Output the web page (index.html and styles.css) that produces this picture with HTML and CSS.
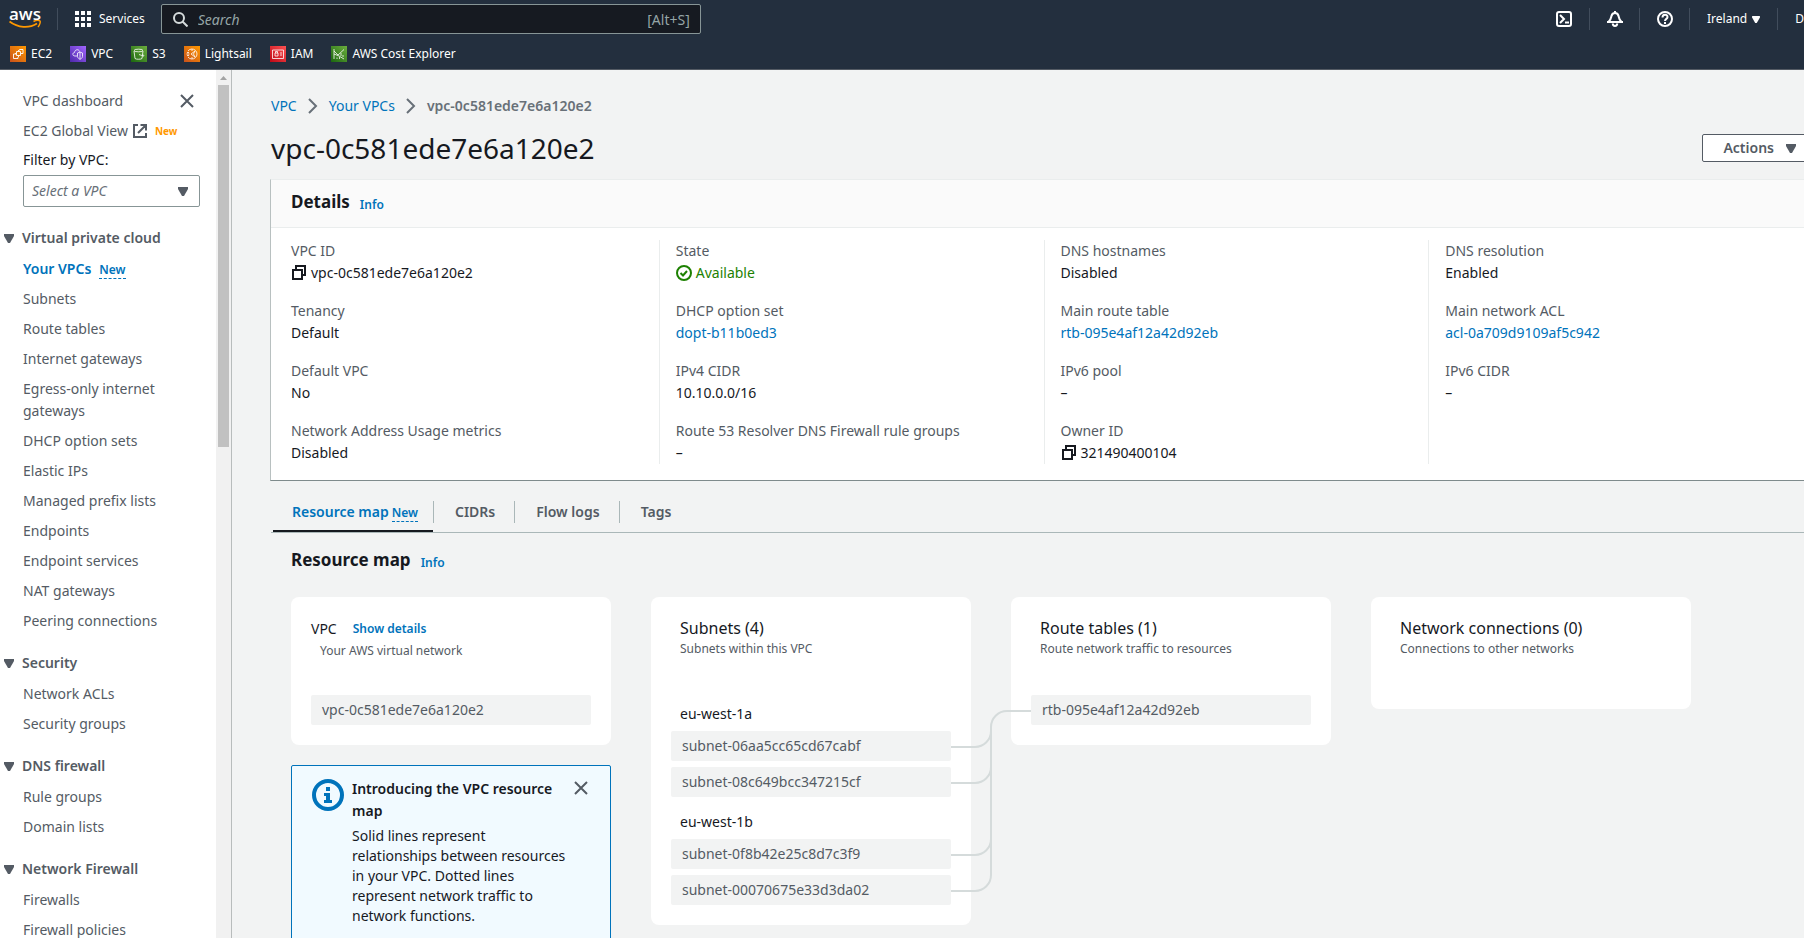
FILE: index.html
```html
<!DOCTYPE html>
<html lang="en">
<head>
<meta charset="utf-8">
<title>vpc-0c581ede7e6a120e2 | VPC Console</title>
<link rel="stylesheet" href="styles.css">
</head>
<body>
<svg class="defs" aria-hidden="true">
  <defs>
    <linearGradient id="orange" x1="0" y1="1" x2="1" y2="0"><stop offset="0" stop-color="#c8511b"/><stop offset="1" stop-color="#ff9900"/></linearGradient>
    <linearGradient id="purple" x1="0" y1="1" x2="1" y2="0"><stop offset="0" stop-color="#4d27aa"/><stop offset="1" stop-color="#a166ff"/></linearGradient>
    <linearGradient id="green" x1="0" y1="1" x2="1" y2="0"><stop offset="0" stop-color="#1b660f"/><stop offset="1" stop-color="#6cae3e"/></linearGradient>
    <linearGradient id="red" x1="0" y1="1" x2="1" y2="0"><stop offset="0" stop-color="#bd0816"/><stop offset="1" stop-color="#ff5252"/></linearGradient>
    <symbol id="caret" viewBox="0 0 10 9"><path d="M0 0h10v2L6 9H4L0 2z"/></symbol>
    <symbol id="close" viewBox="0 0 14 14"><path d="M1 1l12 12M13 1L1 13" fill="none" stroke="currentColor" stroke-width="2"/></symbol>
    <symbol id="copy" viewBox="0 0 16 16"><path d="M2 5h9v9H2zM5 4.500V1h9v9h-2.500" fill="none" stroke="currentColor" stroke-width="2"/></symbol>
    <symbol id="chevron" viewBox="0 0 10 16"><path d="M1 1l7 7-7 7" fill="none" stroke="currentColor" stroke-width="2"/></symbol>
  </defs>
</svg>

<header class="topbar">
  <div class="topbar-main">
    <a class="logo" href="#" aria-label="AWS home">
      <span class="logo-word">aws</span>
      <svg class="logo-smile" viewBox="0 0 32 9" aria-hidden="true"><path d="M.5 1.500C9 8 20 8.500 28 3.500" fill="none" stroke="#ff9900" stroke-width="1.800"/><path d="M24.500 1.500C27 .3 30 .3 31 1c.6 1-.3 4-2 6" fill="none" stroke="#ff9900" stroke-width="1.500"/></svg>
    </a>
    <button class="services" type="button">
      <svg width="16" height="16" viewBox="0 0 16 16" fill="currentColor" aria-hidden="true"><path d="M0 0h4v4H0zM6 0h4v4H6zM12 0h4v4h-4zM0 6h4v4H0zM6 6h4v4H6zM12 6h4v4h-4zM0 12h4v4H0zM6 12h4v4H6zM12 12h4v4h-4z"/></svg>
      Services
    </button>
    <div class="search">
      <svg width="15" height="15" viewBox="0 0 15 15" fill="none" stroke="currentColor" stroke-width="2" aria-hidden="true"><circle cx="6" cy="6" r="5"/><path d="M9.500 9.500l5 5"/></svg>
      <input type="text" placeholder="Search" aria-label="Search">
      <span>[Alt+S]</span>
    </div>
    <div class="tools">
      <button type="button" class="tool" aria-label="CloudShell"><svg width="16" height="16" viewBox="0 0 16 16" fill="none" stroke="currentColor" stroke-width="2" aria-hidden="true"><rect x="1" y="1" width="14" height="14" rx="2"/><path d="M4 4l4 4-4 4M9 11.500h4"/></svg></button>
      <button type="button" class="tool" aria-label="Notifications"><svg width="16" height="16" viewBox="0 0 16 16" fill="none" stroke="currentColor" stroke-width="2" aria-hidden="true"><path d="M8 0v2M1.500 11C4 8.500 4 7 4.300 5.500 4.700 3.300 6 2 8 2s3.300 1.300 3.700 3.500C12 7 12 8.500 14.500 11M0 11h16M5.800 12.500c0 3.200 4.400 3.200 4.400 0"/></svg></button>
      <button type="button" class="tool" aria-label="Help"><svg width="16" height="16" viewBox="0 0 16 16" fill="none" stroke="currentColor" stroke-width="2" aria-hidden="true"><circle cx="8" cy="8" r="7"/><path d="M5.500 6.500C5.500 3 10.500 3 10.500 6c0 2-2.500 1.700-2.500 4M8 11v2"/></svg></button>
      <button type="button" class="region">Ireland <svg width="8" height="7" fill="currentColor" aria-hidden="true"><use href="#caret"/></svg></button>
      <button type="button" class="account">D</button>
    </div>
  </div>
  <nav class="favorites" aria-label="Favorites">
    <a href="#"><svg viewBox="0 0 16 16" aria-hidden="true"><path fill="url(#orange)" d="M0 0h16v16H0z"/><path d="M6.500 5.500h4v4h-4zM6 8H3.500v4.500H8V11M9.500 4.500v-1h3.500v4h-1.500M8.500 4v1M5 7.500h1M11 7.500h1M8.500 10v1" fill="none" stroke="#fff" stroke-width=".9"/></svg>EC2</a>
    <a href="#"><svg viewBox="0 0 16 16" aria-hidden="true"><path fill="url(#purple)" d="M0 0h16v16H0z"/><path d="M7 10H5c-3 0-2.500-3.500-.5-3.500C5 3 9 3 9.500 5.500M10 6l2.500 1v3.500c0 1.500-2.500 3-2.500 3s-2.500-1.500-2.500-3V7zM10 6v7" fill="none" stroke="#fff" stroke-width=".8"/></svg>VPC</a>
    <a href="#"><svg viewBox="0 0 16 16" aria-hidden="true"><path fill="url(#green)" d="M0 0h16v16H0z"/><path d="M3 5l1 7.500c1 1 6 1 7 0L12 5M8 8.500l4.500 1.500c1 0 .5-.8-.8-1.300" fill="none" stroke="#fff" stroke-width=".8"/><ellipse cx="7.500" cy="4.500" rx="4.500" ry="1.300" fill="none" stroke="#fff" stroke-width=".8"/></svg>S3</a>
    <a href="#"><svg viewBox="0 0 16 16" aria-hidden="true"><path fill="url(#orange)" d="M0 0h16v16H0z"/><path d="M4 5a5 5 0 1 1 0 6M2.500 8h3M3 6.500h2M3 9.500h2M7 8l4-3-1.500 3L11 11zM8 3v2M8 11v2" fill="none" stroke="#fff" stroke-width=".8"/></svg>Lightsail</a>
    <a href="#"><svg viewBox="0 0 16 16" aria-hidden="true"><path fill="url(#red)" d="M0 0h16v16H0z"/><path d="M2.500 4h11v8.500h-11zM5 7h3v3H5zM5.500 7V5.500h2V7M10 7h2M10 9h2" fill="none" stroke="#fff" stroke-width=".8"/></svg>IAM</a>
    <a href="#"><svg viewBox="0 0 16 16" aria-hidden="true"><path fill="url(#green)" d="M0 0h16v16H0z"/><path d="M3 3v10M3 5l4 4 6-5.500M3 8l5 2 5 3M6 11.500V13M8.500 11v2M10 7v3M12 9v2" fill="none" stroke="#fff" stroke-width=".8"/></svg>AWS Cost Explorer</a>
  </nav>
</header>

<div class="shell">
  <aside class="sidebar">
    <nav class="side-nav" aria-label="VPC">
      <div class="side-top">
        <a href="#">VPC dashboard</a>
        <button type="button" class="icon-button" aria-label="Close navigation"><svg width="14" height="14" aria-hidden="true"><use href="#close"/></svg></button>
      </div>
      <div class="side-global">
        <a href="#">EC2 Global View</a>
        <svg width="14" height="14" viewBox="0 0 14 14" fill="none" stroke="currentColor" stroke-width="2" aria-hidden="true"><path d="M5 1H1v12h12V9M7.500 1H13v5.500M13 1L5 9"/></svg>
        <span class="badge-new">New</span>
      </div>
      <label class="filter-label" for="vpc-filter">Filter by VPC:</label>
      <div class="select">
        <select id="vpc-filter"><option>Select a VPC</option></select>
        <svg width="10" height="9" aria-hidden="true"><use href="#caret"/></svg>
      </div>
      <section class="group">
        <button type="button" class="group-title"><svg width="10" height="9" aria-hidden="true"><use href="#caret"/></svg>Virtual private cloud</button>
        <ul>
          <li><a class="current" href="#">Your VPCs</a><span class="new">New</span></li>
          <li><a href="#">Subnets</a></li>
          <li><a href="#">Route tables</a></li>
          <li><a href="#">Internet gateways</a></li>
          <li><a href="#">Egress-only internet gateways</a></li>
          <li><a href="#">DHCP option sets</a></li>
          <li><a href="#">Elastic IPs</a></li>
          <li><a href="#">Managed prefix lists</a></li>
          <li><a href="#">Endpoints</a></li>
          <li><a href="#">Endpoint services</a></li>
          <li><a href="#">NAT gateways</a></li>
          <li><a href="#">Peering connections</a></li>
        </ul>
      </section>
      <section class="group">
        <button type="button" class="group-title"><svg width="10" height="9" aria-hidden="true"><use href="#caret"/></svg>Security</button>
        <ul>
          <li><a href="#">Network ACLs</a></li>
          <li><a href="#">Security groups</a></li>
        </ul>
      </section>
      <section class="group">
        <button type="button" class="group-title"><svg width="10" height="9" aria-hidden="true"><use href="#caret"/></svg>DNS firewall</button>
        <ul>
          <li><a href="#">Rule groups</a></li>
          <li><a href="#">Domain lists</a></li>
        </ul>
      </section>
      <section class="group">
        <button type="button" class="group-title"><svg width="10" height="9" aria-hidden="true"><use href="#caret"/></svg>Network Firewall</button>
        <ul>
          <li><a href="#">Firewalls</a></li>
          <li><a href="#">Firewall policies</a></li>
        </ul>
      </section>
    </nav>
    <div class="scrollbar" aria-hidden="true">
      <svg width="7" height="4" viewBox="0 0 7 4"><path d="M3.500 0L7 4H0z" fill="#a3a3a3"/></svg>
      <div class="thumb"></div>
    </div>
  </aside>

  <main class="content">
    <div class="page">
      <nav class="breadcrumb" aria-label="Breadcrumb">
        <a href="#">VPC</a>
        <svg width="10" height="16" aria-hidden="true"><use href="#chevron"/></svg>
        <a href="#">Your VPCs</a>
        <svg width="10" height="16" aria-hidden="true"><use href="#chevron"/></svg>
        <span>vpc-0c581ede7e6a120e2</span>
      </nav>
      <div class="page-head">
        <h1>vpc-0c581ede7e6a120e2</h1>
        <button type="button" class="actions">Actions <svg width="10" height="9" fill="currentColor" aria-hidden="true"><use href="#caret"/></svg></button>
      </div>

      <section class="card">
        <div class="card-head"><h2>Details</h2><a class="info" href="#">Info</a></div>
        <div class="columns">
          <dl>
            <div><dt>VPC ID</dt><dd><svg width="16" height="16" aria-hidden="true"><use href="#copy"/></svg>vpc-0c581ede7e6a120e2</dd></div>
            <div><dt>Tenancy</dt><dd>Default</dd></div>
            <div><dt>Default VPC</dt><dd>No</dd></div>
            <div><dt>Network Address Usage metrics</dt><dd>Disabled</dd></div>
          </dl>
          <dl>
            <div><dt>State</dt><dd class="ok"><svg width="16" height="16" viewBox="0 0 16 16" fill="none" stroke="currentColor" stroke-width="2" aria-hidden="true"><circle cx="8" cy="8" r="7"/><path d="M4.500 8l2.500 2.500 4-4.500"/></svg>Available</dd></div>
            <div><dt>DHCP option set</dt><dd><a href="#">dopt-b11b0ed3</a></dd></div>
            <div><dt>IPv4 CIDR</dt><dd>10.10.0.0/16</dd></div>
            <div><dt>Route 53 Resolver DNS Firewall rule groups</dt><dd>–</dd></div>
          </dl>
          <dl>
            <div><dt>DNS hostnames</dt><dd>Disabled</dd></div>
            <div><dt>Main route table</dt><dd><a href="#">rtb-095e4af12a42d92eb</a></dd></div>
            <div><dt>IPv6 pool</dt><dd>–</dd></div>
            <div><dt>Owner ID</dt><dd><svg width="16" height="16" aria-hidden="true"><use href="#copy"/></svg>321490400104</dd></div>
          </dl>
          <dl>
            <div><dt>DNS resolution</dt><dd>Enabled</dd></div>
            <div><dt>Main network ACL</dt><dd><a href="#">acl-0a709d9109af5c942</a></dd></div>
            <div><dt>IPv6 CIDR</dt><dd>–</dd></div>
          </dl>
        </div>
      </section>

      <div class="tabs" role="tablist">
        <button type="button" role="tab" aria-selected="true" class="tab active">Resource map <span class="new">New</span></button>
        <button type="button" role="tab" class="tab">CIDRs</button>
        <button type="button" role="tab" class="tab">Flow logs</button>
        <button type="button" role="tab" class="tab">Tags</button>
      </div>

      <section class="map">
        <div class="map-head"><h2>Resource map</h2><a class="info" href="#">Info</a></div>
        <div class="map-columns">
          <div class="map-column">
            <article class="tile vpc-tile">
              <header><h3>VPC</h3><a class="info" href="#">Show details</a></header>
              <p>Your AWS virtual network</p>
              <button type="button" class="node">vpc-0c581ede7e6a120e2</button>
            </article>
            <section class="notice">
              <svg width="32" height="32" viewBox="0 0 32 32" aria-hidden="true"><circle cx="16" cy="16" r="14" fill="none" stroke="#0073bb" stroke-width="4"/><path d="M14 8h4v4h-4zM12 14h6v7h2v3h-8v-3h2v-4h-2z" fill="#0073bb"/></svg>
              <div class="notice-text">
                <h3>Introducing the VPC resource map</h3>
                <p>Solid lines represent relationships between resources in your VPC. Dotted lines represent network traffic to network functions.</p>
              </div>
              <button type="button" class="icon-button" aria-label="Dismiss"><svg width="14" height="14" aria-hidden="true"><use href="#close"/></svg></button>
            </section>
          </div>
          <article class="tile">
            <h3>Subnets (4)</h3>
            <p>Subnets within this VPC</p>
            <div class="zone">
              <h4>eu-west-1a</h4>
              <button type="button" class="node">subnet-06aa5cc65cd67cabf</button>
              <button type="button" class="node">subnet-08c649bcc347215cf</button>
            </div>
            <div class="zone">
              <h4>eu-west-1b</h4>
              <button type="button" class="node">subnet-0f8b42e25c8d7c3f9</button>
              <button type="button" class="node">subnet-00070675e33d3da02</button>
            </div>
            <svg class="links" width="80" height="184" viewBox="0 0 80 184" fill="none" stroke="#d5dbdb" stroke-width="2" aria-hidden="true">
              <path d="M0 38h24a16 16 0 0 0 16-16V18A16 16 0 0 1 56 2h24"/>
              <path d="M0 74h24a16 16 0 0 0 16-16V18"/>
              <path d="M0 146h24a16 16 0 0 0 16-16V18"/>
              <path d="M0 182h24a16 16 0 0 0 16-16V18"/>
            </svg>
          </article>
          <article class="tile">
            <h3>Route tables (1)</h3>
            <p>Route network traffic to resources</p>
            <button type="button" class="node">rtb-095e4af12a42d92eb</button>
          </article>
          <article class="tile">
            <h3>Network connections (0)</h3>
            <p>Connections to other networks</p>
          </article>
        </div>
      </section>
    </div>
  </main>
</div>
</body>
</html>
```

FILE: styles.css
```css
* { box-sizing: border-box; }

body {
  margin: 0;
  height: 100vh;
  overflow: hidden;
  display: flex;
  flex-direction: column;
  font-family: "Noto Sans", "Open Sans", sans-serif;
  font-size: 14px;
  line-height: 22px;
  color: #16191f;
  background: #f2f3f3;
}

h1, h2, h3, h4, p, ul, dl, dd { margin: 0; padding: 0; }
ul { list-style: none; }
svg { flex: none; }
a { color: #0073bb; text-decoration: none; }
button { font: inherit; color: inherit; background: none; border: 0; padding: 0; cursor: pointer; }
.defs { position: absolute; width: 0; height: 0; }

/* Top bar */
.topbar {
  flex: none;
  height: 70px;
  background: #232f3e;
  border-bottom: 1px solid #545b64;
  color: #fff;
  font-size: 12px;
}
.topbar-main { display: flex; align-items: center; height: 38px; padding-left: 9px; }
.logo { display: flex; flex-direction: column; width: 49px; height: 22px; border-right: 1px solid #414d5c; color: #fff; }
.logo-word { font-family: "Open Sans", sans-serif; font-size: 17px; font-weight: 600; line-height: 12px; }
.logo-smile { width: 32px; height: 9px; }
.services { display: flex; align-items: center; gap: 8px; margin: 0 16px 0 17px; }
.search {
  display: flex;
  align-items: center;
  gap: 10px;
  width: 540px;
  height: 30px;
  padding: 0 10px 0 11px;
  background: #161a21;
  border: 1px solid #879596;
  border-radius: 2px;
  color: #d5dbdb;
  font-size: 14px;
}
.search input { flex: 1; min-width: 0; padding: 2px 0 0; border: 0; outline: 0; background: none; font: inherit; color: #fff; }
.search input::placeholder { font-style: italic; color: #95a5a6; opacity: 1; }
.search span { padding-top: 2px; color: #95a5a6; }
.tools { display: flex; align-items: center; margin-left: auto; }
.tools button { display: flex; align-items: center; height: 22px; border-left: 1px solid #414d5c; }
.tools .tool { width: 50px; justify-content: center; }
.tools .tool:first-child { border-left: 0; }
.tools .region { padding: 0 17px; gap: 5px; }
.tools .account { padding-left: 17px; }
.favorites { display: flex; gap: 18px; padding: 5px 10px; }
.favorites a { display: flex; align-items: center; gap: 5px; color: #fff; }
.favorites svg { width: 16px; height: 16px; }

/* Shell */
.shell { flex: 1; min-height: 0; display: flex; }
.sidebar { flex: none; display: flex; width: 232px; background: #fff; border-right: 1px solid #b8bcbc; overflow: hidden; }
.side-nav { flex: 1; color: #545b64; padding: 20px 16px 0 23px; }
.side-nav a { color: #545b64; }
.side-nav svg { fill: #545b64; }
.side-top { display: flex; align-items: center; justify-content: space-between; padding-right: 6px; margin-bottom: 8px; }
.icon-button { display: flex; color: #545b64; }
.side-global { display: flex; align-items: center; gap: 5px; margin-bottom: 8px; }
.side-nav .side-global svg { fill: none; }
.badge-new { padding-left: 3px; font-size: 10px; font-weight: 700; color: #ff9900; }
.filter-label { display: block; line-height: 20px; color: #16191f; margin-bottom: 5px; }
.select { display: grid; align-items: center; margin-bottom: 20px; }
.select select {
  grid-area: 1 / 1;
  appearance: none;
  width: 100%;
  height: 32px;
  padding: 0 8px;
  border: 1px solid #879596;
  border-radius: 2px;
  background: #fff;
  font: inherit;
  font-style: italic;
  color: #687078;
}
.select svg { grid-area: 1 / 1; justify-self: end; margin-right: 12px; pointer-events: none; }
.group { margin-bottom: 20px; }
.group-title { display: flex; align-items: center; gap: 8px; margin: 0 0 9px -19px; font-weight: 600; color: #545b64; }
.group ul { display: flex; flex-direction: column; gap: 8px; }
.side-nav .current { font-weight: 600; color: #0073bb; margin-right: 8px; }
.new { display: inline-block; font-size: 12px; font-weight: 600; line-height: 16px; color: #0073bb; border-bottom: 1px dashed #0073bb; }
.scrollbar { width: 15px; background: #f1f1f1; display: flex; flex-direction: column; align-items: center; padding-top: 6px; gap: 5px; }
.thumb { width: 11px; height: 42%; background: #c1c1c1; }

/* The page column runs past the window's right edge */
.content { flex: 1; min-width: 0; overflow: hidden; }
.page { margin: 25px -30px 0 39px; }
.breadcrumb { display: flex; align-items: center; gap: 11px; color: #687078; }
.breadcrumb span { font-weight: 600; }
.page-head { display: flex; align-items: center; justify-content: space-between; padding: 13px 17px 13px 0; }
.page-head h1 { font-size: 28px; font-weight: 400; line-height: 36px; }
.actions {
  display: flex;
  align-items: center;
  gap: 12px;
  height: 28px;
  padding: 0 20px;
  background: #fff;
  border: 1px solid #545b64;
  border-radius: 2px;
  font-weight: 600;
  color: #545b64;
}

/* Details card */
.card { margin-left: -1px; background: #fff; border: 1px solid #eaeded; border-left-color: #b8c0c0; border-bottom-color: #7f8b8c; }
.card-head { display: flex; align-items: center; gap: 10px; height: 48px; padding: 0 20px 3px; background: #fafafa; border-bottom: 1px solid #eaeded; }
h2 { font-size: 17px; font-weight: 700; line-height: 22px; }
.info { font-size: 12px; font-weight: 600; line-height: 16px; padding-top: 5px; }
.columns { display: grid; grid-template-columns: repeat(4, 1fr); padding: 12px 20px 16px 3px; }
.columns dl { display: flex; flex-direction: column; gap: 16px; padding-left: 16px; border-left: 1px solid #eaeded; }
.columns dl:first-child { border-left-color: transparent; }
dt { color: #545b64; }
dd { display: flex; align-items: center; gap: 4px; }
.ok { color: #1d8102; }

/* Tabs */
.tabs { display: flex; margin-top: 10px; padding-left: 2px; border-bottom: 1px solid #aab7b8; }
.tab { display: flex; align-items: center; gap: 4px; height: 41px; padding: 2px 19px 0; font-weight: 600; color: #545b64; border-bottom: 2px solid transparent; }
.tab + .tab { padding-left: 0; }
.tab + .tab::before { content: ""; width: 1px; height: 22px; margin-right: 17px; background: #aab7b8; }
.tab .new { margin-top: 3px; }
.tab.active { gap: 3px; padding-right: 15px; color: #0073bb; border-bottom-color: #16191f; }

/* Resource map */
.map { padding: 16px 20px 0; }
.map-head { display: flex; align-items: center; gap: 10px; margin-bottom: 26px; }
.map-columns { display: flex; align-items: flex-start; gap: 40px; }
.map-column { display: flex; flex-direction: column; gap: 20px; }
.tile { position: relative; flex: none; width: 320px; padding: 20px; background: #fff; border-radius: 8px; }
.tile h3 { padding-left: 9px; font-size: 16px; font-weight: 400; line-height: 22px; }
.tile p { padding-left: 9px; margin-bottom: 36px; font-size: 12px; line-height: 20px; color: #545b64; }
.tile p:last-child { margin-bottom: 30px; }
.vpc-tile header { display: flex; align-items: center; gap: 16px; }
.tile.vpc-tile h3 { padding: 0; font-size: 14px; line-height: 24px; }
.vpc-tile .info { padding: 0; }
.tile.vpc-tile p { margin-bottom: 34px; }
.zone { display: flex; flex-direction: column; gap: 6px; margin-top: 14px; }
p + .zone { margin-top: 44px; }
.tile h4 { padding-left: 9px; font-weight: 400; }
.node { display: block; width: 100%; height: 30px; padding: 0 11px; text-align: left; color: #545b64; background: #f2f3f3; border-radius: 2px; }
.links { position: absolute; left: 300px; top: 112px; z-index: 1; }

.notice { display: flex; align-items: flex-start; gap: 8px; width: 320px; padding: 12px 22px 20px 20px; background: #f1faff; border: 1px solid #0073bb; border-radius: 2px; }
.notice-text { flex: 1; }
.notice > svg { margin-top: 1px; }
.notice h3 { font-size: 14px; font-weight: 600; line-height: 22px; margin-bottom: 4px; }
.notice p { line-height: 20px; }
.notice .icon-button { margin-top: 3px; }
```
